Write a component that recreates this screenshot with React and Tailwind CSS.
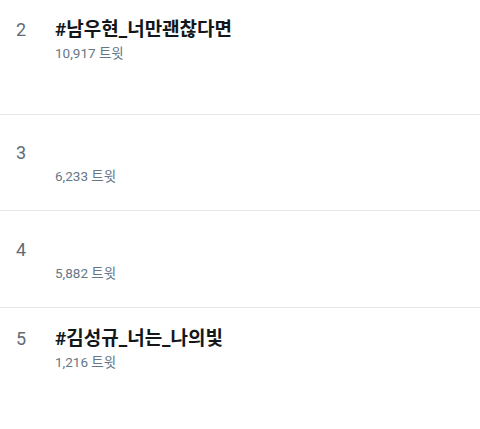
import React from 'react';

const trends = [
  { rank: 2, title: '#남우현_너만괜찮다면', count: '10,917', height: 'h-[115px]', pad: 'pt-[18px]' },
  { rank: 3, title: '', count: '6,233', height: 'h-[96px]', pad: 'pt-[26px]' },
  { rank: 4, title: '', count: '5,882', height: 'h-[97px]', pad: 'pt-[27px]' },
  { rank: 5, title: '#김성규_너는_나의빛', count: '1,216', height: 'h-[122px]', pad: 'pt-[19px]', last: true },
];

function TrendRow({ rank, title, count, height, pad, last }) {
  return (
    <div className={`flex ${height} ${pad} ${last ? '' : 'border-b border-[#e6e6e6]'}`}>
      <div className="w-[55px] pl-[16px]">
        <span className="block text-[18px] leading-[24px] text-[#5f6b75]">{rank}</span>
      </div>
      <div className="flex flex-col">
        <span className="h-[24px] text-[19px] leading-[24px] font-bold text-[#14171a]">{title}</span>
        <span className="mt-[2px] text-[13.5px] leading-[18px] text-[#657786]">{count} 트윗</span>
      </div>
    </div>
  );
}

export default function App() {
  return (
    <div
      className="w-[480px] h-[429px] overflow-hidden bg-white"
      style={{ fontFamily: 'Roboto, "Noto Sans CJK KR", sans-serif' }}
    >
      {trends.map(t => (
        <TrendRow key={t.rank} {...t} />
      ))}
    </div>
  );
}
